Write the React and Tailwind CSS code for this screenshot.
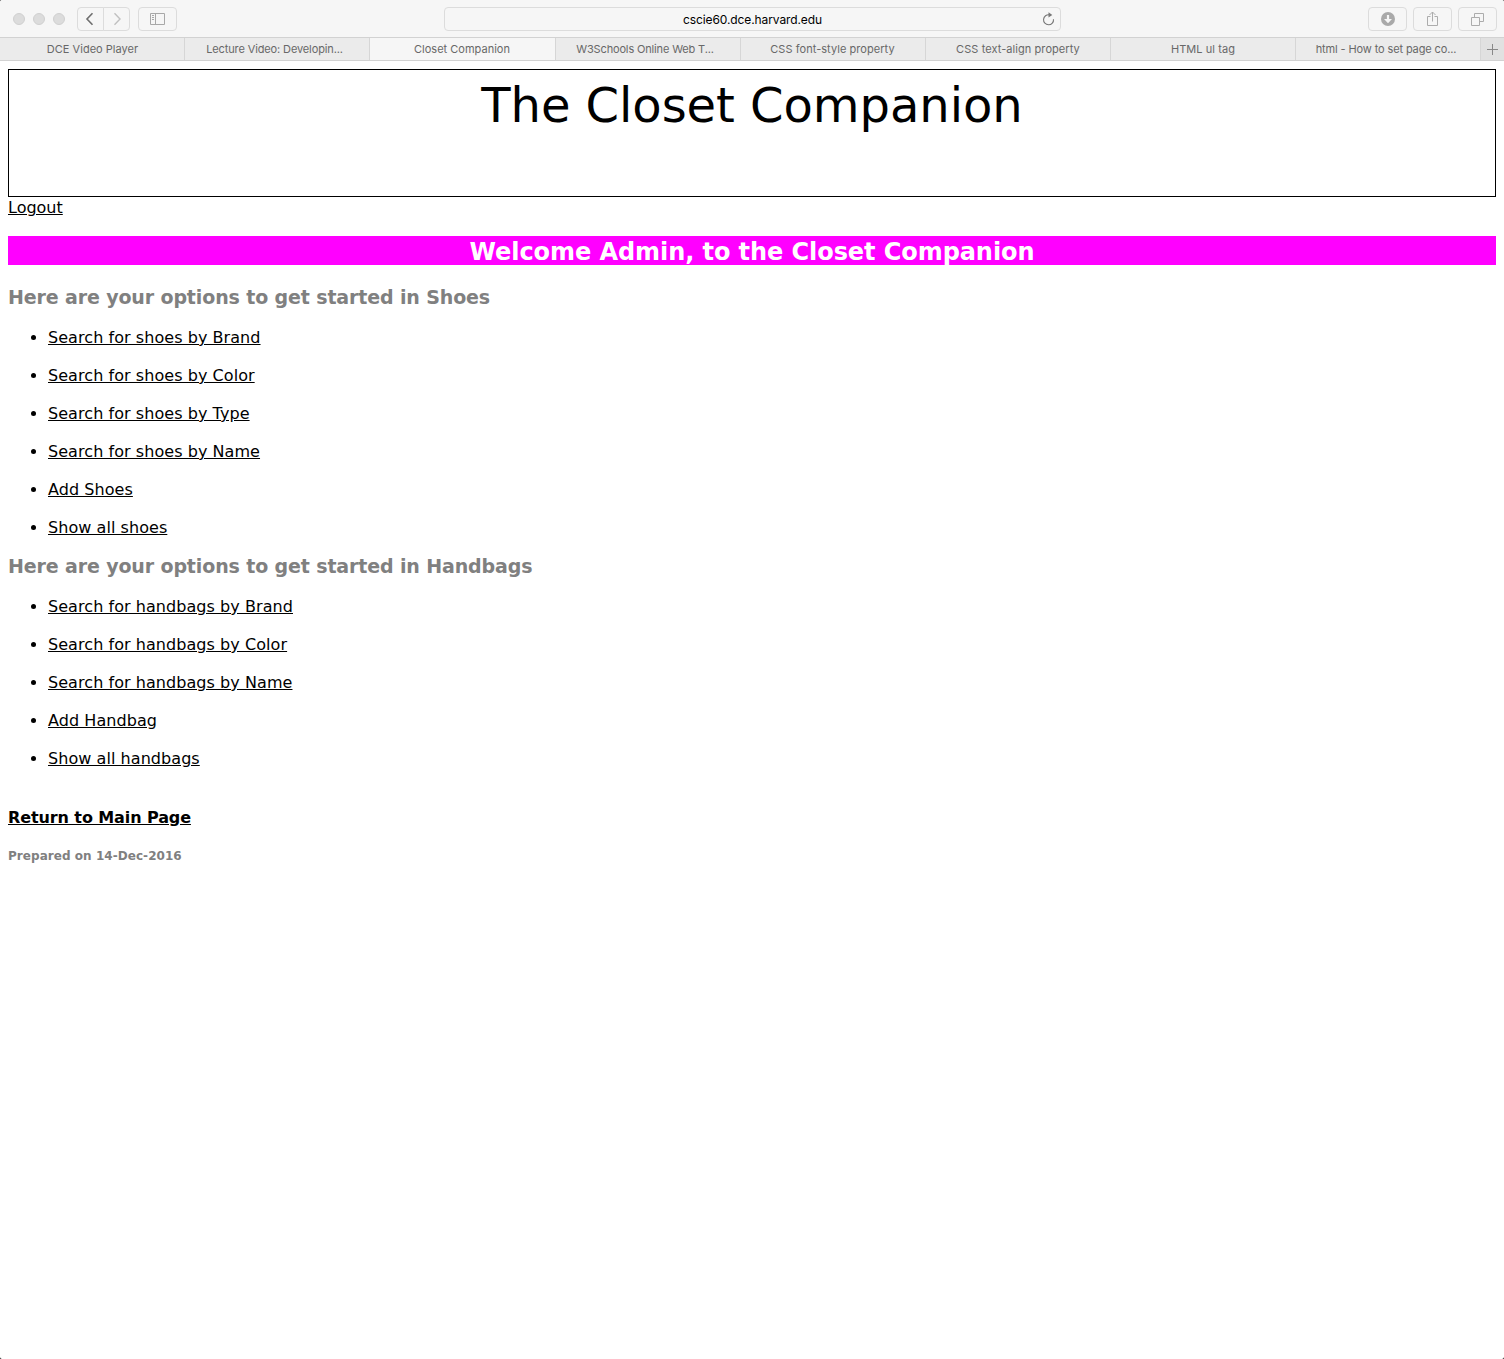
const tabs = [
  ["DCE Video Player", "w-[185px]", "tracking-[0.02px] pl-px"],
  ["Lecture Video: Developin...", "w-[185px]", "tracking-[-0.12px] pr-[5px]"],
  ["Closet Companion", "w-[186px]", "tracking-[0.01px] pr-px"],
  ["W3Schools Online Web T...", "w-[185px]", "tracking-[-0.15px] pr-1.5"],
  ["CSS font-style property", "w-[185px]", "tracking-[0.05px] pr-px"],
  ["CSS text-align property", "w-[185px]", "tracking-[0.07px]"],
  ["HTML ul tag", "w-[185px]", "tracking-[0.07px]"],
  ["html - How to set page co...", "w-[185px]", "tracking-[-0.12px] pr-1"],
];

const shoes = [
  "Search for shoes by Brand",
  "Search for shoes by Color",
  "Search for shoes by Type",
  "Search for shoes by Name",
  "Add Shoes",
  "Show all shoes",
];

const handbags = [
  "Search for handbags by Brand",
  "Search for handbags by Color",
  "Search for handbags by Name",
  "Add Handbag",
  "Show all handbags",
];

const button =
  "flex h-6 items-center justify-center rounded border border-[#dcdcdc] bg-[#f6f6f6]";

function Toolbar() {
  return (
    <div className="grid h-[37px] grid-cols-[444px_617px_1fr] items-center bg-[#f6f6f6] pt-px">
      <div className="flex items-center">
        <div className="ml-[13px] flex gap-2">
          {[0, 1, 2].map((i) => (
            <span key={i} className="size-3 rounded-full border border-[#d0d0d0] bg-[#dcdcdc]" />
          ))}
        </div>
        <button className={`${button} ml-3 w-[27px] rounded-r-none pr-0.5`}>
          <svg width="10" height="14" viewBox="0 0 10 14" fill="none" stroke="#6e6e6e" strokeWidth="1.6">
            <path d="M7.5 1.3 2 7l5.500 5.700" />
          </svg>
        </button>
        <button className={`${button} -ml-px w-[27px] rounded-l-none`}>
          <svg width="10" height="14" viewBox="0 0 10 14" fill="none" stroke="#c0c0c0" strokeWidth="1.4">
            <path d="M2.500 1.300 8 7l-5.500 5.700" />
          </svg>
        </button>
        <button className={`${button} ml-2 w-[39px]`}>
          <svg width="15" height="12" viewBox="0 0 15 12" fill="none" stroke="#a8a8a8">
            <path d="M.5.5h14v11H.5zM5.500.5v11M2 2.500h2M2 4.500h2M2 6.500h2" />
          </svg>
        </button>
      </div>
      <div className="relative flex h-6 items-center justify-center rounded border border-[#dcdcdc] bg-[#f6f6f6] text-[12px] tracking-[-0.1px] text-black">
        <span className="pt-px">cscie60.dce.harvard.edu</span>
        <svg className="absolute top-1 right-[5px]" width="13" height="14" viewBox="0 0 13 14" fill="none" stroke="#777" strokeWidth="1.100">
          <path d="M7.500 2.900A5 5 0 1 0 11.500 7.200" />
          <path d="M6.500.3 10.300 2.900 6.500 5.500z" fill="#777" stroke="none" />
        </svg>
      </div>
      <div className="flex justify-end gap-1.5 pr-[7px]">
        <button className={`${button} w-[39px]`}>
          <svg width="14" height="14" viewBox="0 0 14 14">
            <circle cx="7" cy="7" r="7" fill="#a9a9a9" />
            <path d="M5.900 3h2.200v4H11l-4 4.200L3 7h2.900z" fill="#f6f6f6" />
          </svg>
        </button>
        <button className={`${button} w-[39px]`}>
          <svg className="-mt-px" width="11" height="16" viewBox="0 0 11 16" fill="none" stroke="#acacac">
            <path d="M3.500 5.500h-3v9h10v-9h-3M5.500 10.500V1M2.500 4l3-3 3 3" />
          </svg>
        </button>
        <button className={`${button} w-[39px]`}>
          <svg width="13" height="13" viewBox="0 0 13 13" fill="none" stroke="#acacac">
            <path d="M.5 4.500h8v8h-8zM3.500 4.500v-4h9v8h-4" />
          </svg>
        </button>
      </div>
    </div>
  );
}

function TabBar() {
  return (
    <div className="flex h-6 border-y border-[#d2d2d2] bg-[#ebebeb] text-[11px] text-[#686868]">
      {tabs.map(([title, width, spacing], i) => (
        <div
          key={title}
          className={`${width} ${spacing} flex shrink-0 items-center justify-center border-r border-[#d6d6d6] whitespace-nowrap ${i === 2 ? "bg-[#f6f6f6]" : ""}`}
        >
          <span>{title}</span>
        </div>
      ))}
      <div className="flex flex-1 items-center justify-center bg-[#e1e1e1]">
        <svg width="11" height="11" viewBox="0 0 11 11" stroke="#888">
          <path d="M5.500 0v11M0 5.500h11" />
        </svg>
      </div>
    </div>
  );
}

function LinkList({ items }) {
  return (
    <ul className="ml-10 list-disc tracking-[0.06px]">
      {items.map((item) => (
        <li key={item} className="mb-[19px] h-[19px] leading-[19px]">
          <a className="underline underline-offset-1">{item}</a>
        </li>
      ))}
    </ul>
  );
}

export default function App() {
  return (
    <div className="bg-black">
      <div className="h-[1359px] overflow-hidden rounded-[2px] bg-white text-black">
        <header className="font-[Inter,sans-serif]">
          <Toolbar />
          <TabBar />
        </header>
        <main className="px-2 pt-2 font-['DejaVu_Sans',sans-serif] text-[16px]">
          <div className="h-32 border border-black pt-1.5 text-center text-[48px] leading-[58px] tracking-[-0.05px]">
            <span>The Closet Companion</span>
          </div>
          <p className="h-5 pt-px leading-5">
            <a className="underline underline-offset-1">Logout</a>
          </p>
          <h1 className="mt-[19px] h-[29px] bg-[#ff00ff] pt-0.5 text-center text-[24px] leading-[29px] font-bold tracking-[-0.07px] text-white">
            <span>Welcome Admin, to the Closet Companion</span>
          </h1>
          <h2 className="mt-5 mb-[19px] h-6 text-[19px] leading-6 font-bold tracking-[-0.13px] text-[#808080]">
            <span>Here are your options to get started in Shoes</span>
          </h2>
          <LinkList items={shoes} />
          <h2 className="-mt-0.5 mb-[19px] h-6 text-[19px] leading-6 font-bold tracking-[-0.13px] text-[#808080]">
            <span>Here are your options to get started in Handbags</span>
          </h2>
          <LinkList items={handbags} />
          <p className="mt-10 h-5 leading-5 font-bold tracking-[-0.1px]">
            <a className="underline underline-offset-1">Return to Main Page</a>
          </p>
          <p className="mt-5 h-4 text-[12px] leading-4 font-bold tracking-[0.05px] text-[#808080]">
            <span>Prepared on 14-Dec-2016</span>
          </p>
        </main>
      </div>
    </div>
  );
}
